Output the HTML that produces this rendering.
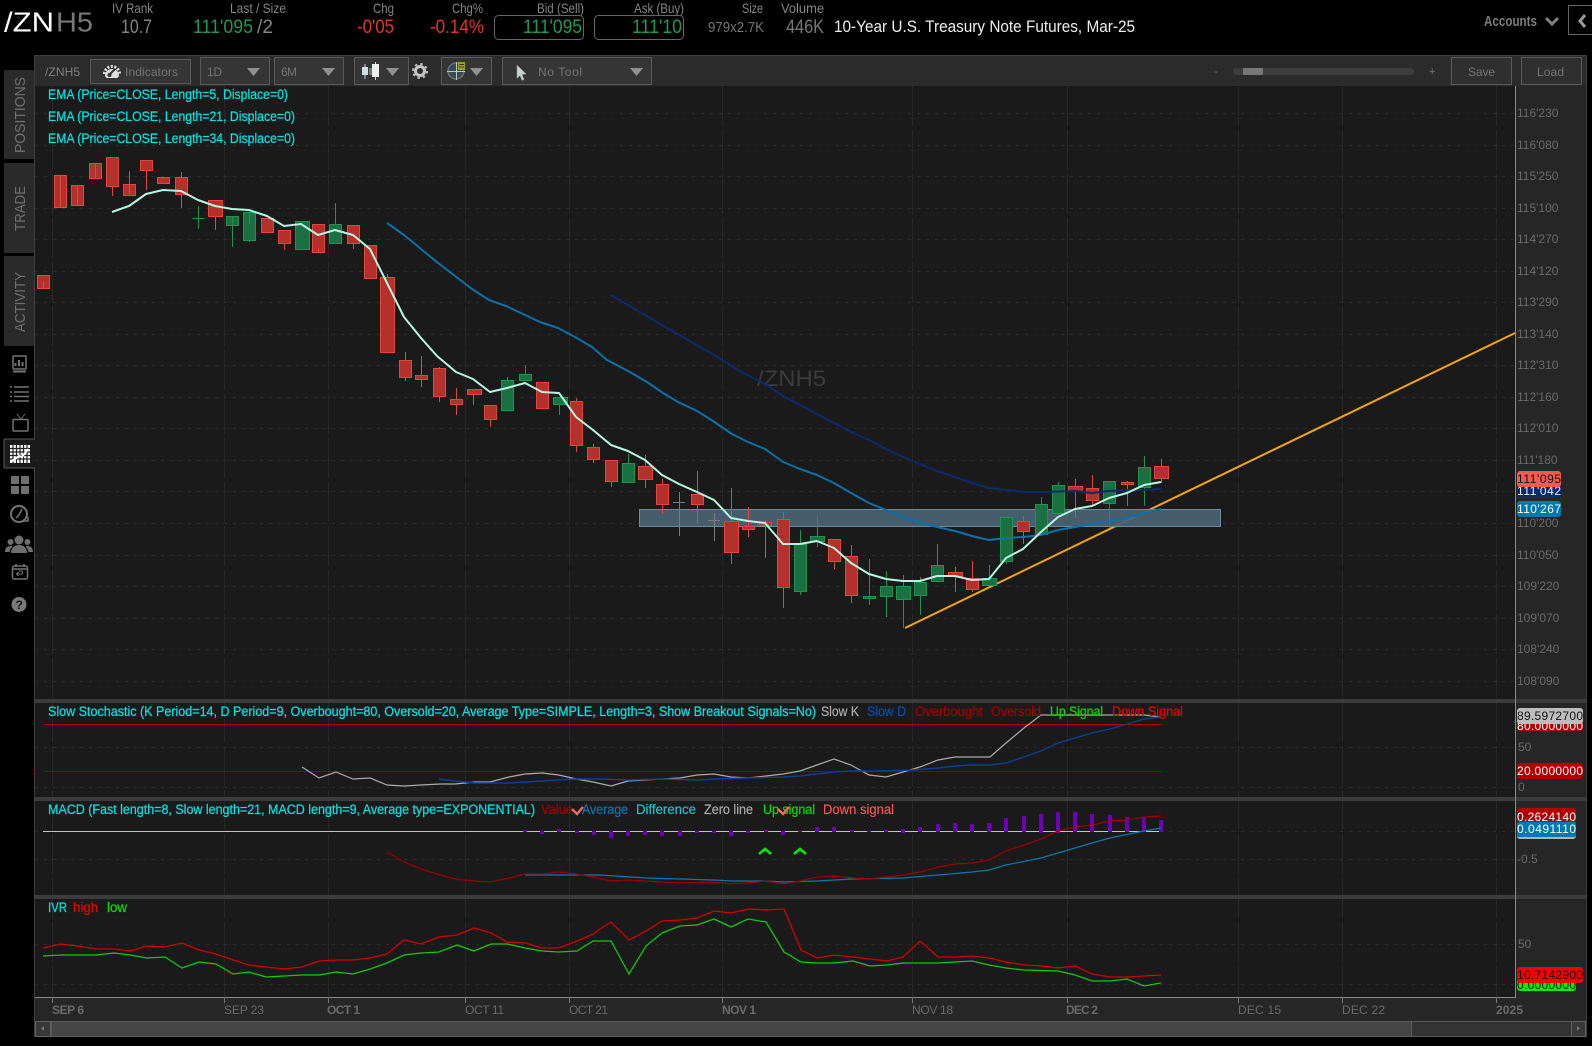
<!DOCTYPE html>
<html><head><meta charset="utf-8"><title>/ZNH5</title>
<style>html,body{margin:0;padding:0;background:#000;width:1592px;height:1046px;overflow:hidden}svg{display:block;font-family:"Liberation Sans",sans-serif}</style></head>
<body>
<svg xmlns="http://www.w3.org/2000/svg" width="1592" height="1046" viewBox="0 0 1592 1046">
<rect width="1592" height="1046" fill="#000"/>
<!-- header -->
<g font-size="28">
<text x="4" y="31.500" fill="#fff" textLength="50" lengthAdjust="spacingAndGlyphs">/ZN</text>
<text x="56" y="31.500" fill="#777" textLength="37" lengthAdjust="spacingAndGlyphs">H5</text>
</g>
<g font-size="14" fill="#858585">
<text x="112" y="13" textLength="41" lengthAdjust="spacingAndGlyphs">IV Rank</text>
<text x="230" y="13" textLength="56" lengthAdjust="spacingAndGlyphs">Last / Size</text>
<text x="373" y="13" textLength="21" lengthAdjust="spacingAndGlyphs">Chg</text>
<text x="452" y="13" textLength="31" lengthAdjust="spacingAndGlyphs">Chg%</text>
<text x="537" y="13" textLength="47" lengthAdjust="spacingAndGlyphs">Bid (Sell)</text>
<text x="634" y="13" textLength="50" lengthAdjust="spacingAndGlyphs">Ask (Buy)</text>
<text x="742" y="13" textLength="21" lengthAdjust="spacingAndGlyphs">Size</text>
<text x="781" y="13" textLength="43" lengthAdjust="spacingAndGlyphs">Volume</text>
</g>
<rect x="494.500" y="15.500" width="89" height="24" rx="4" fill="none" stroke="#666"/>
<rect x="594.500" y="15.500" width="89" height="24" rx="4" fill="none" stroke="#666"/>
<g font-size="19.500">
<text x="121" y="33" fill="#858585" textLength="31" lengthAdjust="spacingAndGlyphs">10.7</text>
<text x="193" y="33" fill="#1f9a52" textLength="60" lengthAdjust="spacingAndGlyphs">111'095</text>
<text x="257" y="33" fill="#858585" textLength="16" lengthAdjust="spacingAndGlyphs">/2</text>
<text x="357" y="33" fill="#e5352b" textLength="37" lengthAdjust="spacingAndGlyphs">-0'05</text>
<text x="430" y="33" fill="#e5352b" textLength="54" lengthAdjust="spacingAndGlyphs">-0.14%</text>
<text x="523" y="33" fill="#1f9a52" textLength="59" lengthAdjust="spacingAndGlyphs">111'095</text>
<text x="632" y="33" fill="#1f9a52" textLength="50" lengthAdjust="spacingAndGlyphs">111'10</text>
<text x="786" y="33" fill="#777" textLength="38" lengthAdjust="spacingAndGlyphs">446K</text>
</g>
<text x="708" y="32" font-size="15" fill="#777" textLength="56" lengthAdjust="spacingAndGlyphs">979x2.7K</text>
<text x="834" y="32" font-size="17" fill="#eee" textLength="301" lengthAdjust="spacingAndGlyphs">10-Year U.S. Treasury Note Futures, Mar-25</text>
<text x="1484" y="26" font-size="15" font-weight="bold" fill="#7d7d7d" textLength="53" lengthAdjust="spacingAndGlyphs">Accounts</text>
<path d="M1546 18l6 6 6-6" fill="none" stroke="#808080" stroke-width="3"/>
<rect x="1568.500" y="5.500" width="30" height="29" fill="none" stroke="#666"/>
<path d="M1585 15l-5 6 5 6" fill="none" stroke="#999" stroke-width="3"/>
<!-- panel -->
<rect x="34" y="55" width="1553" height="982" fill="#3f3f3f"/>
<rect x="35" y="56" width="1551" height="30" fill="#2b2b2b"/>
<rect x="35" y="86" width="1481" height="911" fill="#1a1a1a"/>
<rect x="1516" y="86" width="70" height="911" fill="#262626"/>
<rect x="35" y="997" width="1551" height="24" fill="#262626"/>
<!-- grid -->
<g stroke="#2a2a2a" stroke-dasharray="3 6" fill="none">
<path d="M35 113.500H1515M35 145.500H1515M35 176.500H1515M35 208.500H1515M35 239.500H1515M35 271.500H1515M35 302.500H1515M35 334.500H1515M35 365.500H1515M35 397.500H1515M35 428.500H1515M35 460.500H1515M35 491.500H1515M35 523.500H1515M35 555.500H1515M35 586.500H1515M35 618.500H1515M35 649.500H1515M35 681.500H1515M35 747.500H1515M35 787.500H1515M35 831.500H1515M35 859.500H1515M35 944.500H1515M35 984.500H1515"/>
</g>
<g stroke="#272727" stroke-dasharray="40 4" fill="none">
<path d="M52.500 86V997M224.500 86V997M328.500 86V997M465.500 86V997M569.500 86V997M722.500 86V997M912.500 86V997M1067.500 86V997M1238.500 86V997M1342.500 86V997M1496.500 86V997"/>
</g>
<text x="757" y="386" font-size="22" fill="#3c3c3c" textLength="69" lengthAdjust="spacingAndGlyphs">/ZNH5</text>
<!-- orange trend + zone -->
<path d="M905 628L1515 333" stroke="#f2a70f" stroke-width="2" fill="none"/>
<rect x="639.500" y="509.500" width="581" height="17" fill="#4a6373" fill-opacity=".93" stroke="#6d8a9e"/>
<!-- candles -->
<path shape-rendering="crispEdges" fill="#b3302b" stroke="#e0483f" d="M37.500 275.500h12v13h-12zM43.500 281v7
M54.500 175.500h12v32h-12zM60.500 175v32
M71.500 185.500h12v20h-12zM77.500 185v20
M89.500 163.500h12v15h-12zM95.500 163v15
M106.500 157.500h12v29h-12zM112.500 186v10
M123.500 184.500h12v11h-12zM129.500 171v24
M140.500 160.500h12v10h-12zM146.500 170v20
M157.500 177.500h12v6h-12z
M175.500 177.500h12v17h-12zM181.500 172v5M181.500 194v14
M208.500 200.500h14v16h-14zM215.500 216v14
M261.500 218.500h12v14h-12z
M278.500 230.500h12v13h-12zM284.500 243v7
M312.500 224.500h12v28h-12zM318.500 248v4
M347.500 225.500h12v18h-12zM353.500 243v6
M364.500 245.500h12v33h-12z
M380.500 277.500h14v75h-14zM387.500 274v3
M399.500 360.500h12v17h-12zM405.500 352v8M405.500 377v4
M415.500 375.500h12v4h-12zM421.500 356v19M421.500 379v8
M433.500 368.500h12v28h-12zM439.500 367v1M439.500 396v6
M450.500 399.500h12v5h-12zM456.500 388v11M456.500 404v11
M467.500 389.500h14v5h-14zM473.500 394v11
M484.500 405.500h12v14h-12zM490.500 419v8
M536.500 382.500h12v26h-12z
M570.500 401.500h12v44h-12zM576.500 398v3M576.500 445v7
M587.500 447.500h12v12h-12zM593.500 444v3M593.500 459v4
M605.500 460.500h12v21h-12zM611.500 481v6
M638.500 466.500h14v13h-14zM645.500 455v11M645.500 479v9
M656.500 484.500h12v20h-12zM662.500 479v5M662.500 504v10
M691.500 494.500h12v10h-12zM697.500 471v23M697.500 504v20
M724.500 521.500h14v31h-14zM731.500 488v33M731.500 552v12
M742.500 526.500h12v3h-12zM748.500 507v19M748.500 529v8
M759.500 522.500h12v3h-12zM765.500 520v2M765.500 525v33
M777.500 519.500h12v68h-12zM783.500 512v7M783.500 587v21
M828.500 539.500h12v22h-12zM834.500 561v8
M845.500 556.500h12v39h-12zM851.500 545v11M851.500 595v8
M948.500 572.500h14v4h-14zM955.500 567v5M955.500 576v16
M966.500 578.500h12v11h-12zM972.500 561v17M972.500 589v3
M1017.500 521.500h12v10h-12zM1023.500 516v5M1023.500 531v13
M1068.500 486.500h14v5h-14zM1075.500 479v7M1075.500 491v27
M1086.500 488.500h12v12h-12zM1092.500 475v13M1092.500 500v5
M1121.500 482.500h12v2h-12zM1127.500 481v1M1127.500 484v22
M1154.500 466.500h14v12h-14zM1161.500 459v7M1161.500 478v5"/>
<path shape-rendering="crispEdges" fill="#1a7040" stroke="#229250" d="M192.500 218.500h12M198.500 206v23
M226.500 216.500h12v9h-12zM232.500 216v9M232.500 225v22
M243.500 212.500h12v28h-12zM249.500 212v12M249.500 240v2
M295.500 221.500h14v28h-14z
M329.500 224.500h12v19h-12zM335.500 203v21
M501.500 380.500h12v30h-12zM507.500 377v3
M519.500 374.500h12v6h-12zM525.500 365v9
M553.500 397.500h14v7h-14zM559.500 404v11
M622.500 463.500h12v19h-12zM628.500 454v9
M794.500 544.500h12v47h-12zM800.500 530v14M800.500 591v4
M810.500 536.500h14v5h-14zM817.500 516v20M817.500 541v6
M863.500 596.500h12v2h-12zM869.500 559v37M869.500 598v7
M880.500 586.500h12v10h-12zM886.500 571v15M886.500 596v21
M896.500 586.500h14v13h-14zM903.500 575v11M903.500 599v29
M914.500 582.500h12v13h-12zM920.500 577v5M920.500 595v20
M931.500 565.500h12v16h-12zM937.500 544v21
M982.500 578.500h14v7h-14zM989.500 565v13
M1000.500 517.500h12v44h-12zM1006.500 561v3
M1035.500 504.500h12v30h-12zM1041.500 497v7
M1052.500 485.500h12v28h-12zM1058.500 482v3
M1103.500 481.500h12v22h-12zM1109.500 503v25
M1138.500 467.500h12v20h-12zM1144.500 456v11M1144.500 487v19"/>
<path shape-rendering="crispEdges" fill="none" stroke="#7c7c7c" d="M673 502.500h12M679.500 492v44M708 520.500h12M714.500 513v28"/>
<!-- EMAs -->
<g fill="none" stroke-width="2" stroke-linejoin="round">
<polyline stroke="#0b2a6c" points="611,295 628,305 645,315 662,325 679,335 697,345 714,355 722,360 740,371 765,384 783,396 800,405 817,414 834,423 851,432 869,440 886,449 903,457 920,464 937,471 955,477 972,483 989,488 1006,490 1023,492 1041,492 1075,491 1092,493 1109,491 1161,489"/>
<polyline stroke="#0a72a8" points="387,223 404,235 421,249 438,263 455,276 472,289 489,300 506,306 523,314 540,322 558,328 575,337 592,347 607,360 628,371 647,382 663,393 678,402 697,411 713,421 732,434 748,442 765,449 783,462 800,469 817,475 834,483 851,493 869,503 886,510 903,517 920,523 937,527 955,531 972,536 989,540 1006,538 1023,537 1041,535 1058,530 1075,527 1092,524 1109,521 1127,518 1144,513 1161,509"/>
<polyline stroke="#b4f6e0" points="112,212 129,206 146,194 163,190 181,191 198,200 215,206 232,209 249,210 267,216 284,226 301,224 318,235 335,230 353,235 370,249 387,283 404,317 421,338 437,356 456,372 473,379 490,392 507,388 525,383 542,392 559,393 576,417 593,430 611,445 628,451 645,460 662,475 679,484 697,492 714,500 731,518 748,521 765,523 783,544 800,544 817,541 834,548 851,563 869,574 886,579 903,581 920,581 937,576 955,576 972,580 989,579 1006,558 1023,549 1041,532 1058,517 1075,509 1092,506 1109,498 1127,493 1144,485 1161,482"/>
</g>
<!-- separators -->
<rect x="35" y="699" width="1551" height="4" fill="#3b3b3b"/>
<rect x="35" y="797" width="1551" height="4" fill="#3b3b3b"/>
<rect x="35" y="895" width="1551" height="4" fill="#3b3b3b"/>
<path shape-rendering="crispEdges" d="M1515.500 86V997M35 997.500H1516" stroke="#8a8a8a" fill="none"/>
<path shape-rendering="crispEdges" stroke="#777" d="M52.500 997v6M224.500 997v6M328.500 997v6M465.500 997v6M569.500 997v6M722.500 997v6M912.500 997v6M1067.500 997v6M1238.500 997v6M1342.500 997v6M1496.500 997v6" fill="none"/>
<!-- stochastic -->
<path shape-rendering="crispEdges" d="M43 724.500H1162" stroke="#b00000" fill="none"/>
<path shape-rendering="crispEdges" d="M43 771.500H1162" stroke="#8e0000" fill="none"/>
<polyline fill="none" stroke="#aaa" stroke-width="1.200" points="302,767 319,778 336,772 353,779 370,778 387,785 404,786 421,785 440,784 455,784 475,782 490,782 509,777 525,774 542,773 559,775 576,779 593,782 611,786 628,781 645,780 662,779 680,778 697,775 714,774 731,777 748,778 766,776 783,774 800,771 817,765 834,759 851,765 869,775 886,777 903,772 920,767 938,760 955,757 990,757 1006,743 1024,728 1041,715 1144,715 1161,717"/>
<polyline fill="none" stroke="#0a3f92" stroke-width="1.400" points="439,779 455,781 475,783 509,783 542,781 559,780 576,779 600,779 628,780 662,779 697,780 714,779 748,778 783,777 800,776 817,774 834,772 851,771 886,771 912,770 938,768 955,766 972,765 990,765 1006,763 1024,757 1041,751 1058,743 1075,738 1092,733 1110,729 1127,724 1144,719 1161,717"/>
<!-- macd -->
<path d="M43 831.500H1162" stroke="#c4c4c4" fill="none"/>
<path shape-rendering="crispEdges" stroke="#6e00b8" stroke-width="4" fill="none" d="M525 830v2M542 831v3M559 829v3M577 831v2M594 831v4M611 831v7M628 831v5M645 831v4M662 831v5M680 831v5M697 831v2M714 831v2M731 831v5M748 831v2M766 830v2M783 831v4M800 831v1M817 827v5M834 827v5M852 830v2M869 831v1M886 830v2M903 829v4M920 827v5M938 824v8M955 823v9M972 824v8M989 823v9M1006 818v14M1024 816v16M1041 814v19M1058 812v21M1075 812v20M1092 814v18M1110 815v17M1127 817v15M1144 817v15M1161 820v12"/>
<polyline fill="none" stroke="#057aa8" stroke-width="1.200" points="525,875 600,875 645,878 680,879 714,880 731,881 766,881 783,882 817,881 852,879 903,878 938,875 972,872 989,870 1006,865 1041,858 1075,848 1092,843 1110,838 1144,831 1161,828"/>
<polyline fill="none" stroke="#9c0000" stroke-width="1.200" points="387,852 404,862 421,869 440,875 455,879 475,881 490,882 509,878 525,874 542,874 559,872 576,874 593,877 611,881 628,880 662,882 680,883 714,882 731,884 748,883 766,881 783,884 800,881 817,877 834,876 852,878 869,879 886,877 903,875 920,872 938,867 955,864 972,863 989,860 1006,851 1024,845 1041,839 1058,831 1075,827 1092,825 1110,821 1127,820 1144,817 1161,816"/>
<path d="M759 854l6-5 6 5M794 854l6-5 6 5" fill="none" stroke="#0de60d" stroke-width="2.600"/>
<!-- ivr -->
<polyline fill="none" stroke="#d40000" stroke-width="1.300" points="43,948 61,944 78,946 96,949 114,949 130,951 147,946 165,947 182,943 199,950 216,954 233,960 249,965 266,967 284,969 302,967 319,961 336,960 353,960 370,958 387,954 404,940 421,944 439,937 457,935 474,928 491,933 507,942 525,943 542,948 559,948 577,941 593,934 600,929 611,922 629,940 646,931 662,921 680,920 697,918 714,911 731,913 748,909 766,910 784,909 801,950 817,958 834,955 853,957 870,959 887,961 903,957 920,941 938,957 955,957 972,956 989,958 1006,962 1024,965 1041,966 1058,968 1075,966 1092,974 1110,977 1127,977 1144,976 1161,975"/>
<polyline fill="none" stroke="#10c810" stroke-width="1.300" points="43,956 61,955 96,955 114,953 130,955 147,958 165,957 182,968 199,962 216,964 233,974 249,972 266,977 302,975 319,975 336,972 353,974 370,969 387,963 404,955 421,953 439,952 457,945 474,951 491,944 507,944 525,948 542,951 559,952 577,951 593,941 611,941 629,974 646,946 662,933 680,926 697,925 714,919 731,927 748,919 766,922 784,952 801,962 817,963 834,963 853,961 870,966 887,965 903,963 938,963 972,961 989,965 1006,968 1024,970 1058,971 1075,975 1092,981 1110,981 1127,979 1144,986 1161,983"/>
<!-- legends -->
<g font-size="13.500" fill="currentColor" stroke="currentColor" stroke-width=".2" color="#00e6e6">
<text x="48" y="99" textLength="240" lengthAdjust="spacingAndGlyphs">EMA (Price=CLOSE, Length=5, Displace=0)</text>
<text x="48" y="121" textLength="247" lengthAdjust="spacingAndGlyphs">EMA (Price=CLOSE, Length=21, Displace=0)</text>
<text x="48" y="143" textLength="247" lengthAdjust="spacingAndGlyphs">EMA (Price=CLOSE, Length=34, Displace=0)</text>
<text x="48" y="716" textLength="768" lengthAdjust="spacingAndGlyphs">Slow Stochastic (K Period=14, D Period=9, Overbought=80, Oversold=20, Average Type=SIMPLE, Length=3, Show Breakout Signals=No)</text>
<text x="821" y="716" textLength="38" lengthAdjust="spacingAndGlyphs" color="#aaa">Slow K</text>
<text x="867" y="716" textLength="39" lengthAdjust="spacingAndGlyphs" color="#0a4eae">Slow D</text>
<text x="915" y="716" textLength="68" lengthAdjust="spacingAndGlyphs" color="#a80000">Overbought</text>
<text x="991" y="716" textLength="50" lengthAdjust="spacingAndGlyphs" color="#a80000">Oversold</text>
<text x="1050" y="716" textLength="53" lengthAdjust="spacingAndGlyphs" color="#00e000">Up Signal</text>
<text x="1112" y="716" textLength="71" lengthAdjust="spacingAndGlyphs" color="#f00000">Down Signal</text>
<text x="48" y="814" textLength="487" lengthAdjust="spacingAndGlyphs">MACD (Fast length=8, Slow length=21, MACD length=9, Average type=EXPONENTIAL)</text>
<text x="541" y="814" textLength="32" lengthAdjust="spacingAndGlyphs" color="#a80000">Value</text>
<text x="582" y="814" textLength="46" lengthAdjust="spacingAndGlyphs" color="#0a78b0">Average</text>
<text x="636" y="814" textLength="60" lengthAdjust="spacingAndGlyphs" color="#2abccc">Difference</text>
<text x="704" y="814" textLength="49" lengthAdjust="spacingAndGlyphs" color="#aaa">Zero line</text>
<text x="763" y="814" textLength="52" lengthAdjust="spacingAndGlyphs" color="#00e000">Up signal</text>
<text x="823" y="814" textLength="71" lengthAdjust="spacingAndGlyphs" color="#f05550">Down signal</text>
<text x="48" y="912" textLength="19" lengthAdjust="spacingAndGlyphs">IVR</text>
<text x="73" y="912" textLength="25" lengthAdjust="spacingAndGlyphs" color="#f00000">high</text>
<text x="107" y="912" textLength="20" lengthAdjust="spacingAndGlyphs" color="#00e000">low</text>
</g>
<path d="M572 809l5 5 6-7M778 809l5 5 6-7" fill="none" stroke="#f06a60" stroke-width="2.400"/>
<!-- price labels -->
<g font-size="12" fill="#6a6a6a">
<text x="1517" y="117">116'230</text><text x="1517" y="149">116'080</text><text x="1517" y="180">115'250</text><text x="1517" y="212">115'100</text><text x="1517" y="243">114'270</text><text x="1517" y="275">114'120</text><text x="1517" y="306">113'290</text><text x="1517" y="338">113'140</text><text x="1517" y="369">112'310</text><text x="1517" y="401">112'160</text><text x="1517" y="432">112'010</text><text x="1517" y="464">111'180</text><text x="1517" y="527">110'200</text><text x="1517" y="559">110'050</text><text x="1517" y="590">109'220</text><text x="1517" y="622">109'070</text><text x="1517" y="653">108'240</text><text x="1517" y="685">108'090</text>
<text x="1518" y="751">50</text><text x="1518" y="791">0</text><text x="1517" y="863">-0.5</text><text x="1518" y="948">50</text>
</g>
<!-- price tags -->
<rect x="1517" y="484" width="44" height="14" rx="2" fill="#0a2b6e"/>
<text x="1517" y="495" font-size="12" fill="#eee" textLength="44">111'042</text>
<rect x="1517" y="471" width="44" height="16" rx="3" fill="#f55a50"/>
<text x="1517" y="483" font-size="12" fill="#111" textLength="44">111'095</text>
<rect x="1517" y="501" width="44" height="16" rx="3" fill="#0078b0"/>
<text x="1517" y="513" font-size="12" fill="#fff" textLength="44">110'267</text>
<rect x="1517" y="716" width="66" height="15" rx="3" fill="#b00000"/>
<text x="1517" y="730" font-size="12" fill="#fff" textLength="66">80.0000000</text>
<rect x="1517" y="708" width="66" height="16" rx="3" fill="#bdbdbd"/>
<text x="1517" y="720" font-size="12" fill="#111" textLength="66">89.5972700</text>
<rect x="1517" y="763" width="66" height="16" rx="3" fill="#b00000"/>
<text x="1517" y="775" font-size="12" fill="#fff" textLength="66">20.0000000</text>
<rect x="1517" y="825" width="59" height="14" rx="3" fill="#b4b4a4"/>
<rect x="1517" y="808" width="59" height="16" rx="3" fill="#b00000"/>
<text x="1517" y="821" font-size="12" fill="#fff" textLength="59">0.2624140</text>
<rect x="1517" y="822" width="59" height="15" rx="2" fill="#0078b0"/>
<text x="1517" y="833" font-size="12" fill="#fff" textLength="59">0.0491110</text>
<rect x="1517" y="975" width="59" height="16" rx="3" fill="#00f000"/>
<text x="1517" y="989" font-size="12" fill="#111" textLength="59">0.0000000</text>
<rect x="1517" y="967" width="66" height="16" rx="3" fill="#f50000"/>
<text x="1517" y="979" font-size="12" fill="#111" textLength="66">10.7142900</text>
<!-- dates -->
<g font-size="12" fill="#6a6a6a">
<text x="52" y="1014" font-weight="bold" textLength="32">SEP 6</text>
<text x="224" y="1014" textLength="40">SEP 23</text>
<text x="327" y="1014" font-weight="bold" textLength="33">OCT 1</text>
<text x="465" y="1014" textLength="39">OCT 11</text>
<text x="569" y="1014" textLength="39">OCT 21</text>
<text x="722" y="1014" font-weight="bold" textLength="34">NOV 1</text>
<text x="912" y="1014" textLength="41">NOV 18</text>
<text x="1066" y="1014" font-weight="bold" textLength="32">DEC 2</text>
<text x="1238" y="1014" textLength="43">DEC 15</text>
<text x="1342" y="1014" textLength="43">DEC 22</text>
<text x="1496" y="1014" font-weight="bold" textLength="27">2025</text>
</g>
<!-- scrollbar -->
<rect x="35" y="1021" width="1551" height="16" fill="#333"/>
<path shape-rendering="crispEdges" d="M35 1021.500H1586M35 1036.500H1586" stroke="#585858"/>
<rect x="51.500" y="1021.500" width="1360" height="15" fill="#454545" stroke="#5c5c5c"/>
<rect x="35.500" y="1021.500" width="15" height="15" fill="#383838" stroke="#626262"/>
<rect x="1571.500" y="1021.500" width="14" height="15" fill="#383838" stroke="#626262"/>
<path d="M44 1026v5l-3-2.500zM1577 1026v5l3-2.500z" fill="#777"/>
<!-- toolbar -->
<g fill="#353535" stroke="#5a5a5a" shape-rendering="crispEdges">
<rect x="90.500" y="59.500" width="100" height="24"/>
<rect x="200.500" y="57.500" width="69" height="27"/>
<rect x="274.500" y="57.500" width="69" height="27"/>
<rect x="354.500" y="57.500" width="54" height="27"/>
<rect x="441.500" y="57.500" width="50" height="27"/>
<rect x="502.500" y="57.500" width="149" height="27"/>
<rect x="1451.500" y="57.500" width="60" height="27" fill="#2f2f2f"/>
<rect x="1521.500" y="57.500" width="60" height="27" fill="#2f2f2f"/>
</g>
<g font-size="12" fill="#757575">
<text x="45" y="76" fill="#808080" textLength="35">/ZNH5</text>
<text x="125" y="76" textLength="53">Indicators</text>
<text x="207" y="76" textLength="15">1D</text>
<text x="281" y="76" textLength="16">6M</text>
<text x="538" y="76" textLength="44">No Tool</text>
<text x="1468" y="76" textLength="27">Save</text>
<text x="1537" y="76" textLength="27">Load</text>
</g>
<path d="M247 68h13l-6.500 8zM322 68h13l-6.500 8zM386 68h13l-6.500 8zM470 68h13l-6.500 8zM630 68h13l-6.500 8z" fill="#909090"/>
<!-- indicators gauge -->
<path d="M105 76a7 7 0 0 1 14 0l-1.500 2h-11z" fill="#e0e0e0"/>
<path d="M104.500 74a7.500 7.500 0 0 1 15 0" fill="none" stroke="#ddd" stroke-width="3" stroke-dasharray="2 1.500"/>
<path d="M109 75l6-6" stroke="#333" stroke-width="2"/><circle cx="109.500" cy="75" r="2" fill="#333"/>
<!-- candle icon -->
<path d="M365 64v15M375.500 62v18" stroke="#cfd8d8"/><rect x="362" y="67" width="6" height="8" fill="#cfe0e0"/><rect x="372" y="64" width="7" height="13" fill="#eee"/><rect x="369" y="68" width="3" height="7" fill="#6a7a7a"/>
<!-- gear -->
<circle cx="420" cy="71" r="4.500" fill="none" stroke="#c4c4c4" stroke-width="3"/><circle cx="420" cy="71" r="7" fill="none" stroke="#bbb" stroke-width="2" stroke-dasharray="2.500 3"/>
<!-- draw icon -->
<circle cx="456" cy="71" r="8" fill="#3a4a50" stroke="#607478" stroke-width="1.500"/><path d="M447 71.500h18M456.500 62v18" stroke="#b8c8c8"/><rect x="458" y="62" width="7" height="8" fill="#a0a020"/><path d="M459 64.500h5M459 67h5" stroke="#333"/>
<!-- cursor -->
<path d="M517 65l9 9-4 .500 2 5-2 1-2-5-3 3z" fill="#c8d0d0" stroke="#999" stroke-width=".5"/>
<!-- slider -->
<text x="1214" y="75" font-size="11" fill="#777">-</text>
<rect x="1233" y="68" width="181" height="7" rx="3" fill="#3d3d3d"/>
<rect x="1243" y="68" width="20" height="7" rx="1" fill="#777"/>
<text x="1429" y="75" font-size="11" fill="#777">+</text>
<!-- left tabs -->
<rect x="4" y="70" width="30" height="89" rx="1" fill="#2a2a2a"/>
<rect x="4" y="163" width="30" height="90" fill="#2a2a2a"/>
<rect x="4" y="256" width="30" height="90" fill="#2a2a2a"/>
<g font-size="14.500" fill="#707070">
<text transform="translate(25,153) rotate(-90)" textLength="76" lengthAdjust="spacingAndGlyphs">POSITIONS</text>
<text transform="translate(25,231) rotate(-90)" textLength="45" lengthAdjust="spacingAndGlyphs">TRADE</text>
<text transform="translate(25,332) rotate(-90)" textLength="60" lengthAdjust="spacingAndGlyphs">ACTIVITY</text>
</g>
<!-- sidebar icons -->
<g fill="none" stroke="#747474" stroke-width="1.500">
<rect x="13" y="356" width="13" height="13" rx="1"/><path d="M13 371.500h13" stroke-width="2"/>
<path d="M15.500 366v-3M19 366v-6M22.500 366v-4" stroke-width="2"/>
<path d="M10 387h2M14 387h15M10 392h2M14 392h15M10 396.500h2M14 396.500h15M10 401h2M14 401h15"/>
<rect x="13" y="419.500" width="15" height="11.500" rx="1"/><path d="M17 414l4 5 4-5" stroke-width="1"/>
<circle cx="19" cy="514" r="8" stroke-width="2"/><path d="M19 515l-3 3M19 515l3-6" stroke-width="1.500"/><path d="M23 521l5 0 0-4" stroke-width="1.500"/>
<rect x="12.500" y="566" width="15" height="13" rx="2"/><path d="M12.500 569h15M16 564v3M24 564v3"/><path d="M17 574h5a2 2 0 0 0 0-3h-3M18.500 572l-2 2 2 2" stroke-width="1"/>
</g>
<!-- active tab -->
<path d="M35 439H5a1 1 0 0 0-1 1v27a1 1 0 0 0 1 1h30" fill="#1a1a1a" stroke="#5a5a5a"/>
<rect x="35" y="440" width="1" height="27" fill="#1a1a1a"/>
<rect x="10" y="445" width="20" height="18" fill="#fff"/>
<path d="M13 445v18M16.500 445v18M20 445v18M23.500 445v18M27 445v18M10 448.500h20M10 452h20M10 455.500h20M10 459h20" stroke="#222" stroke-width="1.200"/>
<path d="M12 461l7-5 3 1 6-8" stroke="#fff" stroke-width="2" fill="none"/>
<!-- squares -->
<path d="M11 476h8v8h-8zM21 476h8v8h-8zM11 486h8v8h-8zM21 486h8v8h-8z" fill="#6f6f6f"/>
<!-- people -->
<g fill="#6e6e6e">
<circle cx="19" cy="540" r="4.500"/><path d="M11 553c0-5 3-8 8-8s8 3 8 8z"/>
<circle cx="10.500" cy="542" r="3"/><path d="M5 552c0-4 2-6 5.500-6 1 0 1.500 0 2 .5-1.500 1.500-2.500 3-3 5.500z"/>
<circle cx="27.500" cy="542" r="3"/><path d="M33 552c0-4-2-6-5.500-6-1 0-1.500 0-2 .5 1.500 1.500 2.500 3 3 5.500z"/>
</g>
<!-- help -->
<circle cx="19" cy="604.500" r="7.500" fill="#7a7a7a"/>
<text x="15.500" y="609" font-size="12" font-weight="bold" fill="#111">?</text>
</svg>
</body></html>
